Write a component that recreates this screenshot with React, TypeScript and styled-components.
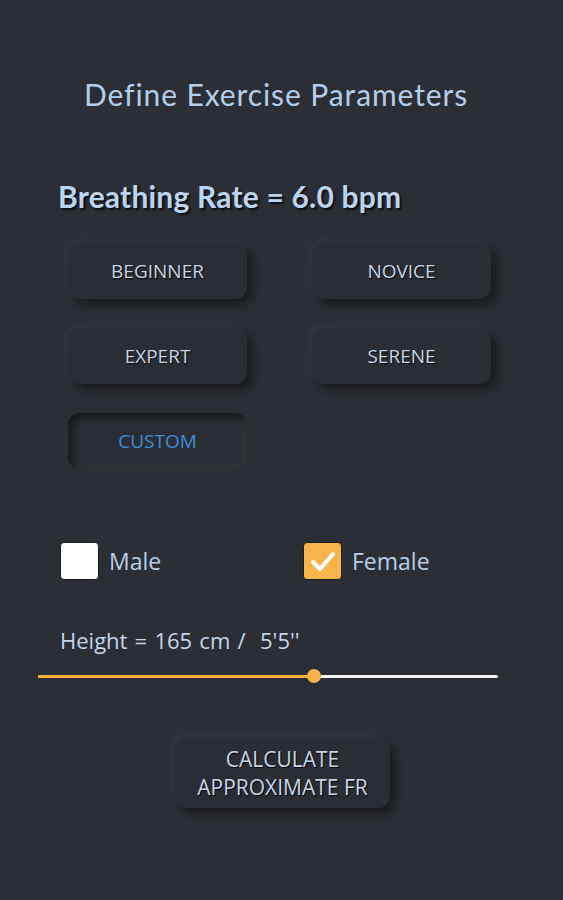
import React from "react";
import styled, {createGlobalStyle} from "styled-components";

const GlobalStyle = createGlobalStyle`
  html, body {
    margin: 0;
    padding: 0;
    background: #2b2e35;
  }
`

const presets = ["BEGINNER", "NOVICE", "EXPERT", "SERENE", "CUSTOM"];
const heightValue = 0.6;

function App() {
  return (
    <>
      <GlobalStyle/>
      <Page>
        <Title>Define Exercise Parameters</Title>
        <Rate>Breathing Rate = 6.0 bpm</Rate>

        <PresetGrid>
          {presets.map(name => (
            <PresetButton key={name} $active={name === "CUSTOM"}>
              {name}
            </PresetButton>
          ))}
        </PresetGrid>

        <GenderRow>
          <Option>
            <Box/>
            <OptionLabel>Male</OptionLabel>
          </Option>
          <Option>
            <Box $checked>
              <svg width="28" height="24" viewBox="0 0 28 24">
                <polyline points="4,13 11,20 24,5" fill="none" stroke="#fff" strokeWidth="4"
                          strokeLinecap="round" strokeLinejoin="round"/>
              </svg>
            </Box>
            <OptionLabel>Female</OptionLabel>
          </Option>
        </GenderRow>

        <HeightLabel>{"Height = 165 cm /  5'5''"}</HeightLabel>
        <Slider>
          <Track>
            <Fill style={{width: `${heightValue * 100}%`}}/>
          </Track>
          <Thumb style={{left: `${heightValue * 100}%`}}/>
        </Slider>

        <CalcRow>
          <CalcButton>CALCULATE<br/>APPROXIMATE FR</CalcButton>
        </CalcRow>
      </Page>
    </>
  );
}

const Page = styled.div`
  min-height: 900px;
  box-sizing: border-box;
  padding-top: 77px;
  background: #2b2e35;
`

const Title = styled.div`
  font-family: Lato, "Open Sans", sans-serif;
  font-size: 30px;
  letter-spacing: 0.9px;
  line-height: 34px;
  color: #b3cdea;
  text-align: center;
  padding-right: 11px;
`

const Rate = styled.div`
  margin-top: 68px;
  padding-left: 58px;
  font-family: Lato, "Open Sans", sans-serif;
  font-weight: 700;
  font-size: 30px;
  letter-spacing: 0.2px;
  line-height: 34px;
  color: #bcd4ee;
  text-shadow: 2px 2px 2px rgba(0, 0, 0, 0.7);
`

const PresetGrid = styled.div`
  margin-top: 30px;
  padding-left: 68px;
  display: grid;
  grid-template-columns: 179px 179px;
  grid-auto-rows: 56px;
  column-gap: 65px;
  row-gap: 29px;
`

const PresetButton = styled.div<{ $active?: boolean }>`
  display: flex;
  align-items: center;
  justify-content: center;
  border-radius: 12px;
  background: #2a2d33;
  font-family: "Open Sans", "Noto Sans", sans-serif;
  font-size: 19px;
  color: ${p => p.$active ? "#3a8ddb" : "#c6d6e8"};
  text-shadow: ${p => p.$active ? "none" : "1px 1px 1px rgba(0, 0, 0, 0.9)"};
  box-shadow: ${p => p.$active
    ? "inset 5px 5px 7px rgba(0, 0, 0, 0.45), inset -3px -3px 6px rgba(255, 255, 255, 0.04)"
    : "6px 6px 8px rgba(0, 0, 0, 0.4), -4px -4px 8px rgba(255, 255, 255, 0.03)"};
`

const GenderRow = styled.div`
  margin-top: 73px;
  padding-left: 60px;
  display: grid;
  grid-template-columns: 243px 243px;
  height: 38px;
`

const Option = styled.div`
  display: flex;
  align-items: center;
`

const Box = styled.div<{ $checked?: boolean }>`
  width: 39px;
  height: 38px;
  box-sizing: border-box;
  border-radius: 4px;
  border: 1px solid #1a1c20;
  background: ${p => p.$checked ? "#f7b44b" : "#ffffff"};
  display: flex;
  align-items: center;
  justify-content: center;
`

const OptionLabel = styled.span`
  margin-left: 10px;
  font-family: "Open Sans", "Noto Sans", sans-serif;
  font-size: 23px;
  color: #b8cfe8;
`

const HeightLabel = styled.div`
  margin-top: 46px;
  padding-left: 60px;
  white-space: pre;
  font-family: "Open Sans", "Noto Sans", sans-serif;
  font-size: 22px;
  word-spacing: 1.5px;
  line-height: 28px;
  color: #c4d6ea;
`

const Slider = styled.div`
  position: relative;
  margin: 14px 0 0 38px;
  width: 460px;
  height: 16px;
  display: flex;
  align-items: center;
`

const Track = styled.div`
  width: 100%;
  height: 3px;
  border-radius: 2px;
  background: #f4f4f4;
  overflow: hidden;
`

const Fill = styled.div`
  height: 100%;
  background: #f3b240;
`

const Thumb = styled.div`
  position: absolute;
  top: 1px;
  width: 14px;
  height: 14px;
  margin-left: -7px;
  border-radius: 50%;
  background: #f5b445;
`

const CalcRow = styled.div`
  margin-top: 54px;
  padding-left: 175px;
`

const CalcButton = styled.div`
  width: 215px;
  height: 70px;
  border-radius: 12px;
  background: #2a2d33;
  display: flex;
  align-items: center;
  justify-content: center;
  text-align: center;
  font-family: "Open Sans", "Noto Sans", sans-serif;
  font-size: 21px;
  line-height: 28px;
  color: #c6d6e8;
  text-shadow: 1px 1px 1px rgba(0, 0, 0, 0.9);
  box-shadow: 6px 6px 9px rgba(0, 0, 0, 0.4), -4px -4px 8px rgba(255, 255, 255, 0.03);
`

export default App;
